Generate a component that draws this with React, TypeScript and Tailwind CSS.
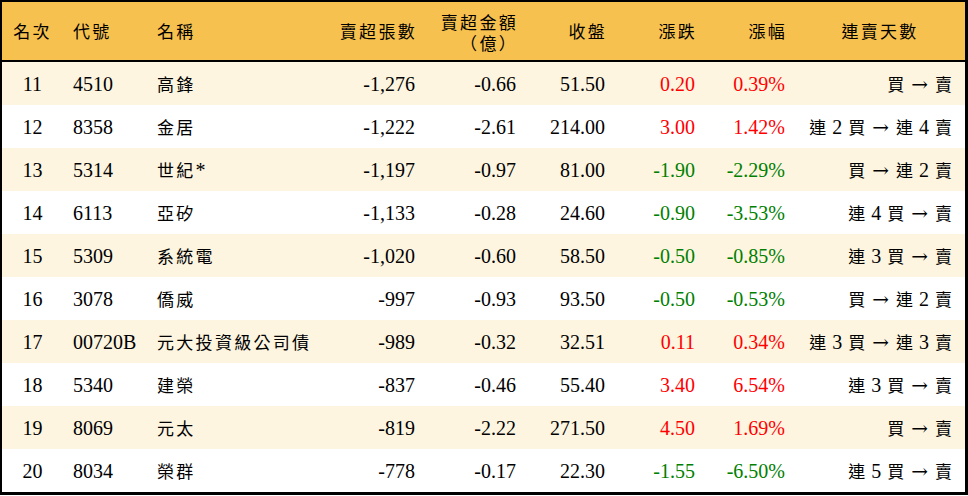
import React from "react";

type Row = {
  rank: string;
  code: string;
  name: string;
  vol: string;
  amt: string;
  close: string;
  chg: string;
  pct: string;
  streak: string;
};

const rows: Row[] = [
  { rank: "11", code: "4510", name: "高鋒", vol: "-1,276", amt: "-0.66", close: "51.50", chg: "0.20", pct: "0.39%", streak: "買 → 賣" },
  { rank: "12", code: "8358", name: "金居", vol: "-1,222", amt: "-2.61", close: "214.00", chg: "3.00", pct: "1.42%", streak: "連 2 買 → 連 4 賣" },
  { rank: "13", code: "5314", name: "世紀*", vol: "-1,197", amt: "-0.97", close: "81.00", chg: "-1.90", pct: "-2.29%", streak: "買 → 連 2 賣" },
  { rank: "14", code: "6113", name: "亞矽", vol: "-1,133", amt: "-0.28", close: "24.60", chg: "-0.90", pct: "-3.53%", streak: "連 4 買 → 賣" },
  { rank: "15", code: "5309", name: "系統電", vol: "-1,020", amt: "-0.60", close: "58.50", chg: "-0.50", pct: "-0.85%", streak: "連 3 買 → 賣" },
  { rank: "16", code: "3078", name: "僑威", vol: "-997", amt: "-0.93", close: "93.50", chg: "-0.50", pct: "-0.53%", streak: "買 → 連 2 賣" },
  { rank: "17", code: "00720B", name: "元大投資級公司債", vol: "-989", amt: "-0.32", close: "32.51", chg: "0.11", pct: "0.34%", streak: "連 3 買 → 連 3 賣" },
  { rank: "18", code: "5340", name: "建榮", vol: "-837", amt: "-0.46", close: "55.40", chg: "3.40", pct: "6.54%", streak: "連 3 買 → 賣" },
  { rank: "19", code: "8069", name: "元太", vol: "-819", amt: "-2.22", close: "271.50", chg: "4.50", pct: "1.69%", streak: "買 → 賣" },
  { rank: "20", code: "8034", name: "榮群", vol: "-778", amt: "-0.17", close: "22.30", chg: "-1.55", pct: "-6.50%", streak: "連 5 買 → 賣" },
];

const cols = "grid grid-cols-[61px_84px_173px_105px_101px_89px_90px_90px_170px]";

function isCJK(ch: string) {
  return /[\u3000-\u9fff\uff00-\uffef]/.test(ch);
}

function Mixed({ text }: { text: string }) {
  const parts: React.ReactNode[] = [];
  let buf = "";
  let bufCJK = false;
  const flush = (key: number) => {
    if (!buf) return;
    if (bufCJK) {
      parts.push(
        <span key={key} className="font-['Noto_Sans_CJK_TC',sans-serif] text-[17px] tracking-[2.3px]">
          {buf}
        </span>
      );
    } else {
      parts.push(<span key={key}>{buf}</span>);
    }
    buf = "";
  };
  Array.from(text).forEach((ch, i) => {
    const c = isCJK(ch);
    if (buf && c !== bufCJK) flush(i);
    bufCJK = c;
    buf += ch;
  });
  flush(9999);
  return <>{parts}</>;
}

function Streak({ text }: { text: string }) {
  const tokens = text.split(" ");
  return (
    <span className="inline-flex items-center gap-[5px]">
      {tokens.map((t, i) => {
        if (t === "→") {
          return (
            <span key={i} className="font-['DejaVu_Serif',serif] text-[20px] leading-none mx-[1px]">
              →
            </span>
          );
        }
        if (isCJK(t)) {
          return (
            <span key={i} className="font-['Noto_Sans_CJK_TC',sans-serif] text-[17px] w-[19px] text-center">
              {t}
            </span>
          );
        }
        return <span key={i}>{t}</span>;
      })}
    </span>
  );
}

function color(v: string) {
  return v.startsWith("-") ? "text-[#008000]" : "text-[#ff0000]";
}

export default function App() {
  return (
    <div className="w-[968px] h-[496px] bg-white font-['Liberation_Serif','Noto_Sans_CJK_TC',serif] text-[20px] text-black">
      <div className="border-2 border-black border-b-[3px] border-r-[3px]">
        <div className={`${cols} h-[60px] items-center bg-[#f7c14f] border-b-[2px] border-black`}>
          <div className="text-center">
            <Mixed text="名次" />
          </div>
          <div className="pl-[10px]">
            <Mixed text="代號" />
          </div>
          <div className="pl-[10px]">
            <Mixed text="名稱" />
          </div>
          <div className="text-right pr-[8px]">
            <Mixed text="賣超張數" />
          </div>
          <div className="pr-[8px] pt-[2px] flex flex-col items-end text-[17px] leading-[21px]">
            <span className="block h-[21px]">
              <Mixed text="賣超金額" />
            </span>
            <span className="block h-[21px]">
              <Mixed text="（億）" />
            </span>
          </div>
          <div className="text-right pr-[8px]">
            <Mixed text="收盤" />
          </div>
          <div className="text-right pr-[8px]">
            <Mixed text="漲跌" />
          </div>
          <div className="text-right pr-[8px]">
            <Mixed text="漲幅" />
          </div>
          <div className="text-center">
            <Mixed text="連賣天數" />
          </div>
        </div>
        {rows.map((r, i) => (
          <div
            key={r.rank}
            className={`${cols} h-[43px] items-center pt-[1px] ${i % 2 === 0 ? "bg-[#fdf5e0]" : "bg-white"}`}
          >
            <div className="text-center">{r.rank}</div>
            <div className="pl-[10px]">{r.code}</div>
            <div className="pl-[10px] whitespace-nowrap">
              <Mixed text={r.name} />
            </div>
            <div className="text-right pr-[10px]">{r.vol}</div>
            <div className="text-right pr-[10px]">{r.amt}</div>
            <div className="text-right pr-[10px]">{r.close}</div>
            <div className={`text-right pr-[10px] ${color(r.chg)}`}>{r.chg}</div>
            <div className={`text-right pr-[10px] ${color(r.pct)}`}>{r.pct}</div>
            <div className="flex justify-end pr-[12px] whitespace-nowrap">
              <Streak text={r.streak} />
            </div>
          </div>
        ))}
      </div>
    </div>
  );
}
